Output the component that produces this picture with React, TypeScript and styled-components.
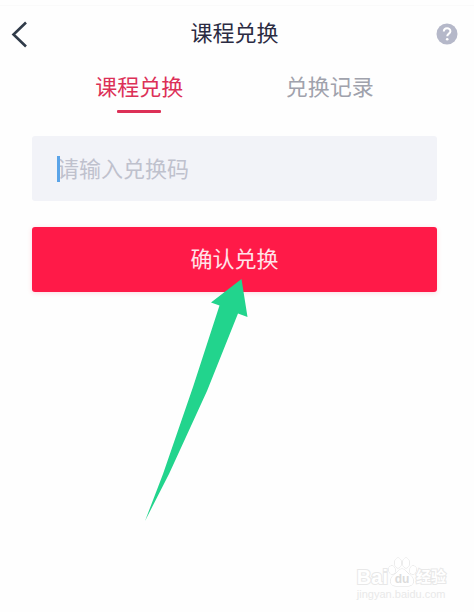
import React, { useState } from "react";
import styled, { createGlobalStyle } from "styled-components";

const GlobalStyle = createGlobalStyle`
  *, *::before, *::after { box-sizing: border-box; }
  body {
    margin: 0;
    background: #fefefe;
    font-family: "Noto Sans CJK SC", "Noto Sans", sans-serif;
  }
  button, input { font: inherit; }
`;

const Page = styled.div`
  position: relative;
  min-height: 100vh;
  padding-top: 5px;
`;

const Header = styled.header`
  display: grid;
  grid-template-columns: 1fr auto 1fr;
  align-items: center;
  height: 56px;
  padding: 0 16px 0 11px;
  border-top: 1px solid #fafafa;
`;

const Title = styled.h1`
  margin: 0;
  padding-bottom: 6px;
  font-size: 22px;
  line-height: 32px;
  font-weight: 400;
  color: #2b2b42;
`;

const IconButton = styled.button<{ $end?: boolean }>`
  display: flex;
  justify-self: ${(p) => (p.$end ? "end" : "start")};
  padding: 0;
  border: 0;
  background: none;
  cursor: pointer;
`;

const Tabs = styled.nav`
  display: grid;
  grid-template-columns: 1fr 1fr;
  padding: 8px 49px 0 44px;
`;

const Tab = styled.button<{ $active: boolean }>`
  display: flex;
  flex-direction: column;
  align-items: center;
  gap: 9px;
  padding: 0;
  border: 0;
  background: none;
  font-size: 22px;
  line-height: 32px;
  color: ${(p) => (p.$active ? "#dc3057" : "#a0a2ac")};
  cursor: pointer;

  &::after {
    content: "";
    width: 44px;
    height: 3px;
    border-radius: 1px;
    background: ${(p) => (p.$active ? "#dc3057" : "transparent")};
  }
`;

const Form = styled.form`
  display: flex;
  flex-direction: column;
  gap: 26px;
  padding: 23px 37px 0 32px;
`;

const Field = styled.label`
  position: relative;
  display: flex;
  align-items: center;
  height: 65px;
  padding: 0 25px;
  border-radius: 3px;
  background: #f2f3f8;
`;

const Caret = styled.span`
  position: absolute;
  left: 25px;
  width: 3px;
  height: 26px;
  background: #5ba4e8;
`;

const CodeInput = styled.input`
  flex: 1;
  min-width: 0;
  height: 36px;
  padding: 0 0 4px;
  border: 0;
  outline: 0;
  background: none;
  font-size: 22px;
  color: #23233a;

  &::placeholder {
    color: #bfc1cd;
    opacity: 1;
  }
`;

const SubmitArea = styled.div`
  position: relative;
`;

const Submit = styled.button`
  display: block;
  width: 100%;
  height: 65px;
  padding: 0 0 6px;
  border: 0;
  border-radius: 3px;
  background: #ff1a48;
  box-shadow: 0 1px 5px rgba(255, 26, 72, 0.16);
  font-size: 22px;
  line-height: 32px;
  color: #ffe3e9;
  cursor: pointer;
`;

const Pointer = styled.svg`
  position: absolute;
  top: 51px;
  right: calc(50% - 14px);
  pointer-events: none;
`;

const Watermark = styled.div`
  position: absolute;
  right: 28px;
  bottom: 11px;
  color: #fff;
  -webkit-text-stroke: 2px #e8e8e8;
  paint-order: stroke fill;
  white-space: nowrap;
  font-family: "Liberation Sans", "Noto Sans CJK SC", sans-serif;
`;

const Brand = styled.div`
  display: flex;
  align-items: flex-end;
  height: 31px;
  font-size: 20px;
  line-height: 20px;
  font-weight: 700;
`;

const BrandCn = styled.span`
  margin-left: auto;
  font-size: 15px;
`;

const Site = styled.div`
  font-size: 11px;
  line-height: 14px;
  color: #e9e9e9;
  -webkit-text-stroke: 0;
`;

const PawIcon = styled.svg`
  flex: none;
  overflow: visible;
  -webkit-text-stroke: 0;
`;

function Paw() {
  return (
    <PawIcon width="28" height="30" viewBox="0 0 28 30" fill="#fff" stroke="#dfdfdf" aria-hidden="true">
      <ellipse cx="4" cy="13" rx="3.2" ry="4.2" transform="rotate(-12 4 13)" />
      <ellipse cx="10" cy="6" rx="3.4" ry="5" />
      <ellipse cx="18" cy="6" rx="3.4" ry="5" />
      <ellipse cx="25" cy="13" rx="3.2" ry="4.2" transform="rotate(12 25 13)" />
      <path d="M14 12C10.500 12 9.500 15.500 6 17.800C1.500 21 1 29 8 29H20C27 29 26.500 21 22 17.800C18.500 15.500 17.500 12 14 12Z" />
      <text
        x="14"
        y="26"
        textAnchor="middle"
        fontFamily="Liberation Sans, sans-serif"
        fontSize="12"
        fontWeight="700"
        fill="#dcdcdc"
        stroke="none"
      >
        du
      </text>
    </PawIcon>
  );
}

const tabs = ["课程兑换", "兑换记录"];

export default function App() {
  const [active, setActive] = useState(0);
  const [code, setCode] = useState("");

  return (
    <>
      <GlobalStyle />
      <Page>
        <Header>
          <IconButton type="button" aria-label="返回">
            <svg width="17" height="28" viewBox="0 0 17 28" fill="none" stroke="#303b49" strokeWidth="2.6">
              <path d="M15 2.500L2.500 14.500L15 26.500" strokeLinejoin="miter" />
            </svg>
          </IconButton>
          <Title>课程兑换</Title>
          <IconButton type="button" $end aria-label="帮助">
            <svg width="22" height="22" viewBox="0 0 22 22" fill="none">
              <circle cx="11" cy="11" r="10.500" fill="#b5b8c9" />
              <path
                d="M7.800 8.600C7.800 4.300 14.400 4.300 14.400 8.200C14.400 10.600 11.200 10.600 11.200 13.200"
                stroke="#fff"
                strokeWidth="2"
              />
              <circle cx="11.200" cy="16.200" r="1.300" fill="#fff" />
            </svg>
          </IconButton>
        </Header>

        <Tabs>
          {tabs.map((label, i) => (
            <Tab key={label} type="button" $active={i === active} onClick={() => setActive(i)}>
              {label}
            </Tab>
          ))}
        </Tabs>

        <Form onSubmit={(e) => e.preventDefault()}>
          <Field>
            {code === "" && <Caret />}
            <CodeInput
              aria-label="兑换码"
              placeholder="请输入兑换码"
              value={code}
              onChange={(e) => setCode(e.target.value)}
            />
          </Field>
          <SubmitArea>
            <Submit type="submit">确认兑换</Submit>
            <Pointer width="104" height="244" viewBox="0 0 104 244" fill="#22d48d" aria-hidden="true">
              <path d="M96.500 1L66 24.500L74.500 27.500L48 109L18 196L0 243L24 196L62 113L93 35.500L102.500 39Z" />
            </Pointer>
          </SubmitArea>
        </Form>

        <Watermark>
          <Brand>
            <span>Bai</span>
            <Paw />
            <BrandCn>经验</BrandCn>
          </Brand>
          <Site>jingyan.baidu.com</Site>
        </Watermark>
      </Page>
    </>
  );
}
